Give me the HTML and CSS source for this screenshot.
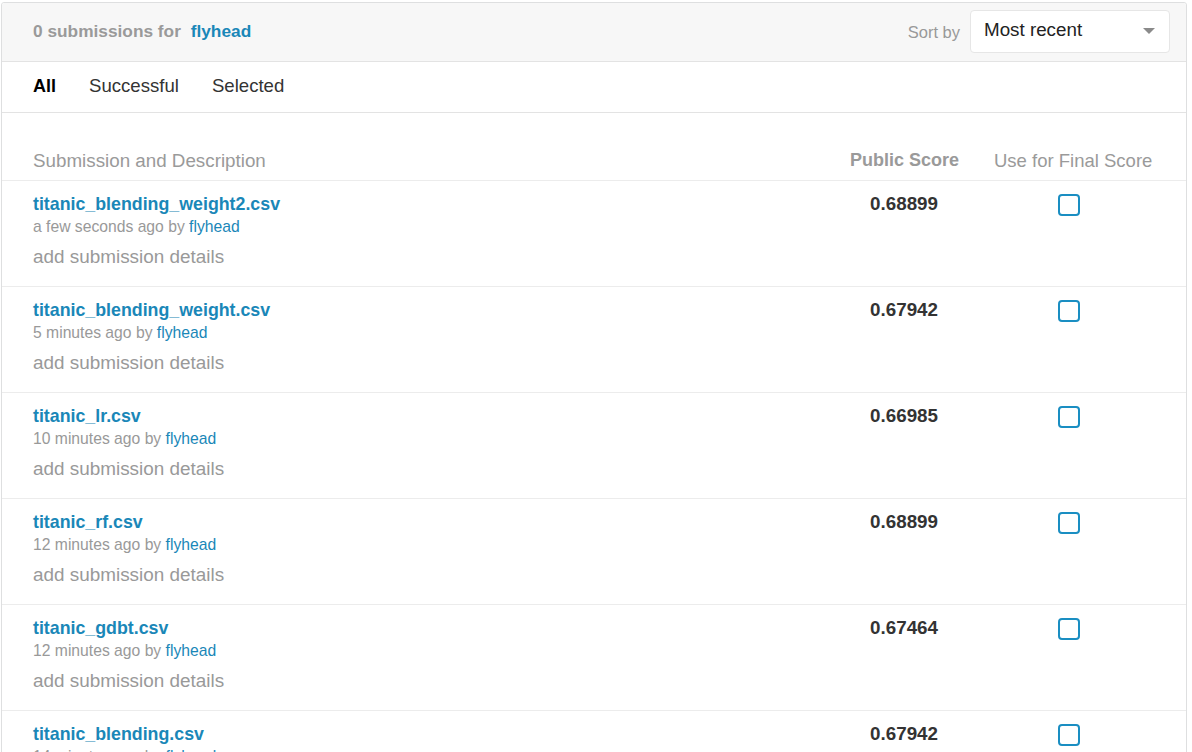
FILE: index.html
```html
<!DOCTYPE html>
<html>
<head>
<meta charset="utf-8">
<link rel="stylesheet" href="styles.css">
</head>
<body>
<div class="card">
  <div class="card-head">
    <div class="title"><span class="count">0 submissions for</span> <a class="user">flyhead</a></div>
    <div class="sort">
      <span class="sort-label">Sort by</span>
      <div class="select"><span>Most recent</span><span class="caret"></span></div>
    </div>
  </div>
  <div class="tabs">
    <span class="tab active">All</span>
    <span class="tab">Successful</span>
    <span class="tab">Selected</span>
  </div>
  <div class="table">
    <div class="thead">
      <div class="c-desc">Submission and Description</div>
      <div class="c-score">Public Score</div>
      <div class="c-final">Use for Final Score</div>
    </div>
    <div class="row">
      <div class="c-desc">
        <a class="fname">titanic_blending_weight2.csv</a>
        <div class="meta">a few seconds ago by <a class="by">flyhead</a></div>
        <div class="details">add submission details</div>
      </div>
      <div class="c-score score">0.68899</div>
      <div class="c-final"><span class="check"></span></div>
    </div>
    <div class="row">
      <div class="c-desc">
        <a class="fname">titanic_blending_weight.csv</a>
        <div class="meta">5 minutes ago by <a class="by">flyhead</a></div>
        <div class="details">add submission details</div>
      </div>
      <div class="c-score score">0.67942</div>
      <div class="c-final"><span class="check"></span></div>
    </div>
    <div class="row">
      <div class="c-desc">
        <a class="fname">titanic_lr.csv</a>
        <div class="meta">10 minutes ago by <a class="by">flyhead</a></div>
        <div class="details">add submission details</div>
      </div>
      <div class="c-score score">0.66985</div>
      <div class="c-final"><span class="check"></span></div>
    </div>
    <div class="row">
      <div class="c-desc">
        <a class="fname">titanic_rf.csv</a>
        <div class="meta">12 minutes ago by <a class="by">flyhead</a></div>
        <div class="details">add submission details</div>
      </div>
      <div class="c-score score">0.68899</div>
      <div class="c-final"><span class="check"></span></div>
    </div>
    <div class="row">
      <div class="c-desc">
        <a class="fname">titanic_gdbt.csv</a>
        <div class="meta">12 minutes ago by <a class="by">flyhead</a></div>
        <div class="details">add submission details</div>
      </div>
      <div class="c-score score">0.67464</div>
      <div class="c-final"><span class="check"></span></div>
    </div>
    <div class="row">
      <div class="c-desc">
        <a class="fname">titanic_blending.csv</a>
        <div class="meta">14 minutes ago by <a class="by">flyhead</a></div>
        <div class="details">add submission details</div>
      </div>
      <div class="c-score score">0.67942</div>
      <div class="c-final"><span class="check"></span></div>
    </div>
  </div>
</div>
</body>
</html>
```

FILE: styles.css
```css
html, body {
  margin: 0;
  padding: 0;
  background: #ffffff;
  font-family: "Liberation Sans", Arial, sans-serif;
  overflow: hidden;
  height: 752px;
}
body {
  padding: 2px 0 0 1px;
}
.card {
  width: 1184px;
  border: 1px solid #dedfe0;
  border-radius: 3px 3px 0 0;
  background: #fff;
}
.card-head {
  height: 58px;
  background: #f7f7f7;
  border-bottom: 1px solid #e3e3e3;
  display: flex;
  align-items: center;
  justify-content: space-between;
  padding: 0 16px 0 31px;
  border-radius: 3px 3px 0 0;
}
.title {
  font-size: 17.3px;
  font-weight: bold;
  margin-top: -2px;
}
.count { color: #9a9a9a; }
.user { color: #1a87b8; margin-left: 5px; }
.sort {
  display: flex;
  align-items: center;
  gap: 10px;
  margin-top: -2px;
}
.sort-label {
  color: #999;
  font-size: 16.5px;
  margin-top: 2px;
}
.select {
  width: 200px;
  height: 43px;
  box-sizing: border-box;
  border: 1px solid #e6e6e6;
  border-radius: 4px;
  background: #fff;
  display: flex;
  align-items: center;
  justify-content: space-between;
  padding: 0 14px 0 13px;
  font-size: 18.8px;
  color: #222;
}
.select span:first-child { margin-top: -2px; }
.caret {
  width: 0;
  height: 0;
  border-left: 6px solid transparent;
  border-right: 6px solid transparent;
  border-top: 6px solid #8a8a8a;
}
.tabs {
  height: 50px;
  border-bottom: 1px solid #e3e3e3;
  display: flex;
  align-items: center;
  padding-left: 31px;
  gap: 33px;
  font-size: 18.6px;
  color: #333;
}
.tab { margin-top: -2px; }
.tab.active { color: #000; font-weight: bold; font-size: 18px; }
.table {
  padding-top: 37px;
}
.thead, .row {
  display: grid;
  grid-template-columns: 1fr 108px 228px;
  padding-left: 31px;
}
.thead {
  height: 30px;
  border-bottom: 1px solid #ececec;
  font-size: 18.8px;
  color: #9a9a9a;
  align-items: start;
}
.thead .c-score {
  font-weight: bold;
  font-size: 18px;
  text-align: right;
  white-space: nowrap;
}
.thead .c-final {
  padding-left: 36px;
  font-size: 18.5px;
  white-space: nowrap;
}
.row {
  border-bottom: 1px solid #ececec;
  align-items: start;
  padding-top: 12px;
  box-sizing: border-box;
  height: 106px;
}
.fname {
  display: block;
  color: #1a87b8;
  font-weight: bold;
  font-size: 17.8px;
  line-height: 22px;
}
.meta {
  font-size: 15.7px;
  color: #999;
  line-height: 22px;
  margin-top: 1px;
}
.by { color: #1a87b8; }
.details {
  font-size: 18.9px;
  color: #999;
  margin-top: 8px;
  line-height: 22px;
}
.score {
  text-align: right;
  padding-right: 20px;
  font-size: 18.8px;
  font-weight: bold;
  color: #333;
  line-height: 22px;
}
.c-final { display: flex; }
.row .c-final { padding-left: 100px; padding-top: 1px; }
.check {
  width: 18px;
  height: 18px;
  border: 2px solid #1a8ec2;
  border-radius: 4px;
  display: block;
}
```
